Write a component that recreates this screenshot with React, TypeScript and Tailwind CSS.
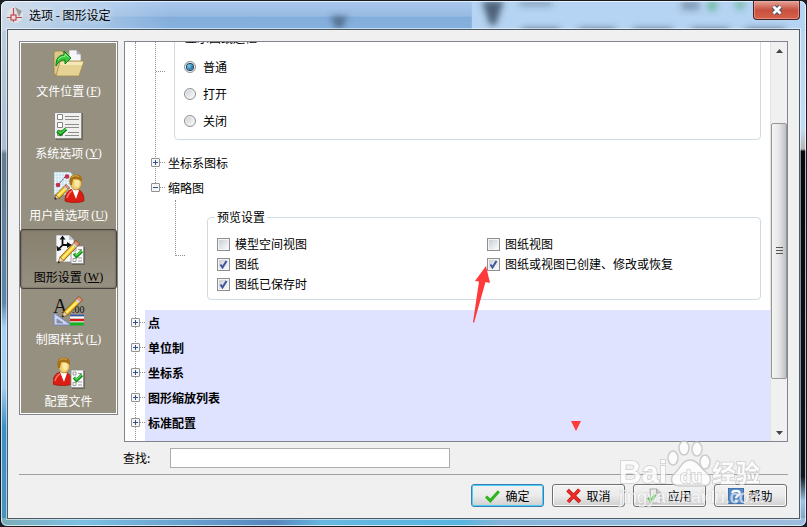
import React, { useState } from "react";

const Pencil = ({ from, to }: { from: [number, number]; to: [number, number] }) => {
  const [x1, y1] = from;
  const [x2, y2] = to;
  const px = (t: number) => x1 + (x2 - x1) * t;
  const py = (t: number) => y1 + (y2 - y1) * t;
  return (
    <g>
      <path d={`M${px(0.2)} ${py(0.2)}L${x2} ${y2}`} stroke="#7a5410" strokeWidth="5.600" />
      <path d={`M${px(0.2)} ${py(0.2)}L${px(0.8)} ${py(0.8)}`} stroke="#f7c31e" strokeWidth="4.400" />
      <path d={`M${px(0.2)} ${py(0.2)}L${px(0.8)} ${py(0.8)}`} stroke="#fff08a" strokeWidth="1.800" />
      <path d={`M${px(0.8)} ${py(0.8)}L${px(0.88)} ${py(0.88)}`} stroke="#d4dae0" strokeWidth="4.400" />
      <path d={`M${px(0.88)} ${py(0.88)}L${px(0.98)} ${py(0.98)}`} stroke="#f28a7c" strokeWidth="4.400" />
      <path
        d={`M${x1} ${y1}L${px(0.2) - 2} ${py(0.2) - 2}L${px(0.2) + 2} ${py(0.2) + 2}Z`}
        fill="#f0d2a0"
        stroke="#6b4a10"
        strokeWidth=".6"
      />
      <circle cx={px(0.04)} cy={py(0.04)} r="1" fill="#222" />
    </g>
  );
};

const Person = ({ x, y }: { x: number; y: number }) => (
  <g transform={`translate(${x} ${y})`}>
    <path d="M0 27C0 20 2 17 6 15.500L13 15.500C17 17 19 21 19 27C14 29 5 29 0 27Z" fill="#dc1d13" stroke="#9b1009" strokeWidth=".7" />
    <path d="M2 24C3 20 5 18 7 17" stroke="#ff7468" strokeWidth="1.500" fill="none" />
    <path d="M7 15L11 25L14 16Z" fill="#fff" />
    <ellipse cx="11" cy="9" rx="5.500" ry="7" fill="#f0cf70" stroke="#a87824" strokeWidth=".6" />
    <ellipse cx="12" cy="9" rx="2.500" ry="4" fill="#fbe9a6" />
    <path d="M4.500 9C3.500 3 7 .5 11 .5C16 .5 18 4 16.500 8C14 4.500 10 5 8 5.500L7 11C5.500 12 4.500 10 4.500 9Z" fill="#a86f16" />
    <path d="M6.500 3.500C8 1.500 12 1 14 3" stroke="#dfb052" fill="none" />
  </g>
);

const CheckCard = ({ x, y }: { x: number; y: number }) => (
  <g transform={`translate(${x} ${y})`}>
    <path d="M1 1H14V19H1Z" fill="#55524a" opacity=".6" />
    <path d="M0 0H12.500V17.500H0Z" fill="#fafafa" stroke="#8a8a8a" strokeWidth=".8" />
    <path d="M2 2H5V5H2ZM2 12.500H5V15.500H2Z" fill="none" stroke="#888" strokeWidth=".8" />
    <path d="M7 3.500H11M7 12H11M7 15H11" stroke="#999" />
    <path d="M3 7.500L5.500 10.500L11 5" stroke="#138a1c" strokeWidth="3.200" fill="none" />
    <path d="M3.500 7.500L5.500 9.500L10.500 5" stroke="#4fdc4d" strokeWidth="1.300" fill="none" />
  </g>
);

const FolderIcon = () => (
  <svg width="32" height="32" viewBox="0 0 32 32">
    <path d="M1 6L2 4H9L11 6H18V28H3L1 27Z" fill="#dcc88a" stroke="#9c8344" strokeWidth=".8" />
    <path d="M16 3H24L28 7V18H16Z" fill="#f6f6fa" stroke="#999" strokeWidth=".7" />
    <path d="M24 3V7H28Z" fill="#b8bcc8" stroke="#888" strokeWidth=".6" />
    <path d="M7 14H31L26 29H3Z" fill="#e6d293" stroke="#a58c4c" strokeWidth=".8" />
    <path d="M8 15H30L29 18H7Z" fill="#fbf2cb" opacity=".7" />
    <path d="M3 19C3 11 6 8 11 8V4L18 11L12 17V13C8 13 6 14 3 19Z" fill="#35c838" stroke="#0e7c18" strokeWidth="1" />
    <path d="M5 13C7 10 9 9.500 12 9.500V7L15.500 10.500" stroke="#a2f59a" fill="none" strokeWidth=".9" />
  </svg>
);

const OptionsIcon = () => (
  <svg width="32" height="32" viewBox="0 0 32 32">
    <path d="M2 4H30V31H3Z" fill="#57544a" opacity=".7" />
    <path d="M1.500 3.500H28.500V29.500H1.500Z" fill="#f0f0ee" stroke="#8d8d88" />
    <path d="M4.500 5.500H9.500V10.500H4.500ZM4.500 13.500H9.500V18.500H4.500ZM4.500 21.500H9.500V26.500H4.500Z" fill="#fff" stroke="#858585" />
    <path d="M12 7.500H26M12 10.500H26M12 15.500H26M12 18.500H26M15 23.500H26M12 26.500H26" stroke="#8d8d8d" />
    <path d="M4.500 22L7.500 25L13 20" stroke="#0f7f19" strokeWidth="3.600" fill="none" />
    <path d="M5 22L7.500 24.300L12.500 20" stroke="#3ddb3c" strokeWidth="1.600" fill="none" />
  </svg>
);

const UserPrefsIcon = () => (
  <svg width="32" height="32" viewBox="0 0 32 32">
    <path d="M1 1H17L21 5V24H1Z" fill="#f6fbff" stroke="#8aa" strokeWidth=".6" />
    <path d="M4 1V24M7 1V24M10 1V24M13 1V24M16 1V24M1 4H20M1 7H20M1 10H20M1 13H20M1 16H20M1 19H20M1 22H20" stroke="#a7d0e6" strokeWidth=".6" />
    <path d="M5 14L13 5" stroke="#444" strokeDasharray="2 1" />
    <circle cx="5" cy="14" r="2.300" fill="#c52f4c" />
    <circle cx="14" cy="5.500" r="2.300" fill="#c52f4c" />
    <Person x={12} y={3} />
    <Pencil from={[2, 28]} to={[15, 15]} />
  </svg>
);

const DrawingIcon = () => (
  <svg width="32" height="32" viewBox="0 0 32 32">
    <path d="M3 2H16L21 7V29H3Z" fill="#f7f8fb" stroke="#858585" strokeWidth=".7" />
    <path d="M16 2V7H21Z" fill="#c5cbd4" />
    <path d="M9.500 4V12L5 17M9 12H17" stroke="#111" strokeWidth="1.800" fill="none" />
    <path d="M6.500 6.500L9.500 2.500L12.500 6.500ZM14 9L19 12L14 15ZM3.500 12.500L4 18L8.500 17Z" fill="#111" />
    <CheckCard x={18} y={13} />
    <Pencil from={[5, 30]} to={[25, 9]} />
  </svg>
);

const StyleIcon = () => (
  <svg width="32" height="32" viewBox="0 0 32 32">
    <text x="0" y="18" fontSize="20" fill="#111" fontFamily="Liberation Serif, serif">A</text>
    <text x="19" y="18" fontSize="10" fill="#111" fontFamily="Liberation Serif, serif">.00</text>
    <path d="M1 18V30H18Z" fill="#ccd4f4" stroke="#7583b4" />
    <path d="M4 24V28H10Z" fill="#969080" stroke="#7583b4" strokeWidth=".7" />
    <path d="M17 20.500H31" stroke="#3154b6" strokeWidth="1.600" />
    <path d="M17 22.500H31" stroke="#fff" strokeWidth="2" />
    <path d="M17 25H31" stroke="#dc1717" strokeWidth="2" />
    <path d="M17 27H31" stroke="#fff" strokeWidth="1" />
    <path d="M17 29H31" stroke="#12b222" strokeWidth="3" />
    <Pencil from={[9, 22]} to={[28, 3]} />
  </svg>
);

const ProfileIcon = () => (
  <svg width="32" height="32" viewBox="0 0 32 32">
    <Person x={0} y={0} />
    <CheckCard x={18} y={13} />
  </svg>
);

const sideItems = [
  { label: "文件位置", accel: "F", icon: <FolderIcon /> },
  { label: "系统选项", accel: "Y", icon: <OptionsIcon /> },
  { label: "用户首选项", accel: "U", icon: <UserPrefsIcon /> },
  { label: "图形设置", accel: "W", icon: <DrawingIcon /> },
  { label: "制图样式", accel: "L", icon: <StyleIcon /> },
  { label: "配置文件", accel: "", icon: <ProfileIcon /> },
];

const sections = ["点", "单位制", "坐标系", "图形缩放列表", "标准配置"];

const AeroBackdrop = () => (
  <svg className="absolute inset-0 w-full h-full" viewBox="0 0 807 527" preserveAspectRatio="none">
    <defs>
      <linearGradient id="title" x1="0" x2="0" y1="0" y2="1">
        <stop offset="0" stopColor="#a9c8ee" />
        <stop offset=".5" stopColor="#98bae2" />
        <stop offset=".55" stopColor="#83addb" />
        <stop offset="1" stopColor="#86b2e0" />
      </linearGradient>
      <linearGradient id="fade" x1="0" x2="1" y1="0" y2="0">
        <stop offset="0" stopColor="#dce3ea" stopOpacity=".8" />
        <stop offset=".55" stopColor="#cfe0f0" stopOpacity=".45" />
        <stop offset="1" stopColor="#cfe0f0" stopOpacity="0" />
      </linearGradient>
      <linearGradient id="left" x1="0" x2="0" y1="0" y2="1">
        <stop offset="0" stopColor="#bccddd" />
        <stop offset=".24" stopColor="#a9bed2" />
        <stop offset=".25" stopColor="#637d94" />
        <stop offset=".55" stopColor="#5f86a8" />
        <stop offset=".6" stopColor="#a9d2f2" />
        <stop offset=".72" stopColor="#a5cdec" />
        <stop offset=".8" stopColor="#3a91c9" />
        <stop offset="1" stopColor="#4a93bd" />
      </linearGradient>
      <linearGradient id="right" x1="0" x2="0" y1="0" y2="1">
        <stop offset="0" stopColor="#bad5f1" />
        <stop offset=".2" stopColor="#c2dcf6" />
        <stop offset=".24" stopColor="#b4b4b4" />
        <stop offset=".245" stopColor="#05090f" />
        <stop offset=".9" stopColor="#0c1520" />
        <stop offset=".95" stopColor="#9ec3e8" />
        <stop offset="1" stopColor="#7598b8" />
      </linearGradient>
      <linearGradient id="bottom" x1="0" x2="1" y1="0" y2="0">
        <stop offset="0" stopColor="#7cacb8" />
        <stop offset=".1" stopColor="#7dc0e2" />
        <stop offset=".34" stopColor="#5786bd" />
        <stop offset=".4" stopColor="#67b8df" />
        <stop offset=".57" stopColor="#58b4df" />
        <stop offset=".62" stopColor="#84b4d9" />
        <stop offset="1" stopColor="#9cbcdc" />
      </linearGradient>
      <filter id="blur"><feGaussianBlur stdDeviation="3" /></filter>
    </defs>
    <rect width="807" height="527" fill="#90b6de" />
    <rect y="29" width="8" height="498" fill="url(#left)" />
    <rect x="799" y="29" width="8" height="498" fill="url(#right)" />
    <rect y="519" width="807" height="8" fill="url(#bottom)" />
    <rect width="807" height="30" fill="url(#title)" />
    <rect width="170" height="30" fill="url(#fade)" />
    <rect x="472" width="335" height="30" fill="#b5d3f2" />
    <g filter="url(#blur)" fill="#33475d">
      <path d="M330 15H348L341 28H336Z" opacity=".6" />
      <path d="M482 0H504L496 24H490Z" opacity=".8" />
      <path d="M522 27H560V34H522ZM579 27H616V34H579ZM634 27H673V34H634ZM692 27H730V34H692ZM746 27H786V34H746Z" opacity=".6" />
      <path d="M520 0H552V5H520ZM682 0H700V9H682Z" opacity=".4" />
      <circle cx="713" cy="5" r="5" fill="#3ba765" opacity=".6" />
      <circle cx="741" cy="4" r="5" fill="#3ba765" opacity=".5" />
    </g>
  </svg>
);

const Expander = ({ open = false }: { open?: boolean }) => (
  <>
    <button
      type="button"
      aria-label={open ? "-" : "+"}
      className="-ml-[5px] w-[9px] h-[9px] shrink-0 rounded-[1px] border border-[#919191] bg-[#f6f6f6]"
    >
      <svg width="7" height="7" viewBox="0 0 7 7" className="block">
        <path d={open ? "M1 3.500H6" : "M1 3.500H6M3.500 1V6"} stroke="#2e5092" />
      </svg>
    </button>
    <span className="w-[5px] shrink-0 border-t border-dotted border-[#909090]" />
  </>
);

interface CheckProps {
  label: string;
  initial?: boolean;
  children?: React.ReactNode;
}

const CheckBox = ({ label, initial = false, children }: CheckProps) => {
  const [checked, setChecked] = useState(initial);
  return (
    <label className="relative flex items-center gap-[5px] h-5">
      <span className="relative w-[13px] h-[13px]">
        <input
          type="checkbox"
          checked={checked}
          onChange={(e) => setChecked(e.target.checked)}
          className="peer block appearance-none w-[13px] h-[13px] border border-[#8e8f8f] bg-linear-to-br from-[#c5cad0] to-white shadow-[inset_0_0_0_1px_#f4f4f4]"
        />
        <svg width="13" height="13" viewBox="0 0 13 13" className="absolute inset-0 hidden peer-checked:block pointer-events-none">
          <path d="M3.500 6.500L5.500 9.500L9.500 3" stroke="#3c559c" strokeWidth="2" fill="none" />
        </svg>
      </span>
      {label}
      {children}
    </label>
  );
};

const Arrow = () => (
  <svg width="20" height="58" viewBox="0 0 20 58" className="absolute z-10 -left-[15px] top-3 pointer-events-none">
    <path d="M14 0L18 17L13.500 16L2 57L1 56L7 15.500L3 15Z" fill="#ff3a3a" />
  </svg>
);

const buttons = [
  {
    label: "确定",
    icon: <path d="M1 8L5 12L13 3" stroke="#2bb51c" strokeWidth="2.800" fill="none" />,
  },
  {
    label: "取消",
    icon: (
      <>
        <path d="M1.500 2L13 13M12.500 1.500L2 13" stroke="#a60d10" strokeWidth="3.400" />
        <path d="M1.500 2L13 13M12.500 1.500L2 13" stroke="#f22a26" strokeWidth="2.400" />
      </>
    ),
  },
  {
    label: "应用",
    icon: (
      <>
        <path d="M3 1H9L13 5V14H3Z" fill="#eee" stroke="#aaa" />
        <path d="M9 1V5H13" fill="#ccc" stroke="#aaa" />
        <path d="M1 9L4 12L8 6" stroke="#31b728" strokeWidth="2.400" fill="none" />
      </>
    ),
  },
  {
    label: "帮助",
    icon: (
      <>
        <rect x="0" y="0" width="15" height="15" rx="1" fill="#568bc8" stroke="#2e5c99" />
        <path d="M4 5C4 2 11 2 11 5C11 7.500 7.500 7 7.500 9.500M7.500 11V13" stroke="#fff" strokeWidth="2" fill="none" />
      </>
    ),
  },
];

const Watermark = () => (
  <svg width="162" height="76" viewBox="0 0 162 76" className="absolute right-[30px] bottom-3 pointer-events-none">
    <g fill="#fff" stroke="#c4c4c4" strokeWidth="1.500" opacity=".8">
      <ellipse cx="59" cy="20" rx="5" ry="7" />
      <ellipse cx="70" cy="10" rx="5" ry="7" />
      <ellipse cx="83" cy="11" rx="5" ry="7" />
      <ellipse cx="91" cy="24" rx="5" ry="7" />
      <path d="M76 22C68 22 67 30 61 35C55 40 57 48 65 48H89C97 48 99 40 93 35C86 30 84 22 76 22Z" />
      <g paintOrder="stroke" fontFamily="Liberation Sans, sans-serif" fontWeight="bold">
        <text x="5" y="45" fontSize="31">Bai</text>
        <text x="66" y="45" fontSize="18">du</text>
      </g>
      <text x="98" y="44" fontSize="24" fontWeight="bold" paintOrder="stroke" fontFamily="Noto Sans CJK SC, sans-serif">经验</text>
      <text x="5" y="65" fontSize="18" strokeWidth="1" opacity=".8" paintOrder="stroke" fontFamily="Liberation Sans, sans-serif">jingyan.baidu.com</text>
    </g>
  </svg>
);

function App() {
  const [active, setActive] = useState("图形设置");
  const [mode, setMode] = useState("普通");
  const [query, setQuery] = useState("");

  return (
    <div className="bg-[#1c2026] text-black text-[12px] leading-4 font-['Noto_Sans_CJK_SC',sans-serif]">
      <div className="relative h-screen overflow-hidden flex flex-col px-[7px] pb-[7px] rounded-[7px] border border-[#181c22]">
        <AeroBackdrop />
        <div className="absolute inset-0 rounded-[6px] border border-white/70 pointer-events-none" />

        <header className="relative flex h-7 shrink-0 -mx-[2px]">
          <div className="flex items-center gap-[6px] pl-px flex-1">
            <svg width="16" height="16" viewBox="0 0 16 16">
              <circle cx="8" cy="8" r="8" fill="#e2e2e4" />
              <path d="M8 0L15 4L12 10Z" fill="#9b9b9e" />
              <path d="M6.500 1V15M0 10.500H15" stroke="#bd4a52" strokeWidth="1.200" />
              <rect x="4" y="8" width="5" height="5" fill="#f1dfe0" stroke="#bd4a52" strokeWidth="1.200" />
            </svg>
            <h1 className="[text-shadow:0_0_6px_#fff]">选项 - 图形设定</h1>
          </div>
          <button
            type="button"
            aria-label="关闭窗口"
            className="flex items-center justify-center w-[47px] h-[19px] mr-px rounded-b-[4px] border border-t-0 border-[#4c2229] bg-linear-to-b from-[#e3a397] via-[#c8513f] via-50% to-[#d7614a] shadow-[inset_0_0_0_1px_#f0b8ac88]"
          >
            <svg width="14" height="12" viewBox="0 0 14 12">
              <path d="M3.500 2.500L10.500 9.500M10.500 2.500L3.500 9.500" stroke="#4f5468" strokeWidth="5" />
              <path d="M3.500 2.500L10.500 9.500M10.500 2.500L3.500 9.500" stroke="#fff" strokeWidth="2.800" />
            </svg>
          </button>
        </header>

        <main className="relative flex flex-col flex-1 min-h-0 -mx-px border border-[#4c5a66] bg-[#f0f0f0] px-[11px] py-[11px] shadow-[0_0_0_1px_#ffffff88]">
          <div className="flex flex-1 min-h-0 items-start gap-[6px]">
            <nav className="w-[99px] shrink-0 border border-[#84848c] bg-[#969080] shadow-[inset_0_0_0_1px_#fff]">
              {sideItems.map((item) => (
                <button
                  type="button"
                  key={item.label}
                  onClick={() => setActive(item.label)}
                  className={
                    "relative flex flex-col items-center w-full h-[62px] pt-[5px] gap-1 " +
                    (active === item.label ? "text-black" : "text-white")
                  }
                >
                  {active === item.label && (
                    <span className="absolute inset-x-0 top-px bottom-px rounded-[3px] border border-[#45423b] bg-linear-to-b from-[#87806f] to-[#969080] shadow-[inset_0_0_2px_#504d45]" />
                  )}
                  <span className="relative">{item.icon}</span>
                  <span className="relative flex gap-[2px] whitespace-nowrap">
                    {item.label}
                    {item.accel && (
                      <span className="font-['Liberation_Serif',serif]">
                        (<u>{item.accel}</u>)
                      </span>
                    )}
                  </span>
                </button>
              ))}
            </nav>

            <section className="flex flex-1 min-w-0 h-full border border-[#84848c] bg-white">
              <div className="flex-1 min-w-0 h-full overflow-hidden">
                <ul className="ml-[10px] min-h-full border-l border-dotted border-[#909090]">
                  <li>
                    <ul className="ml-[19px] border-l border-dotted border-[#909090] pb-2">
                      <li className="flex items-start">
                        <span className="w-[9px] h-[30px] shrink-0 border-b border-dotted border-[#909090]" />
                        <fieldset className="flex-1 min-w-0 -mt-3 mx-[9px] px-[9px] pt-[7px] pb-[5px] border border-[#d0dbe3] rounded-[4px]">
                          <legend className="px-px">显示图纸边框</legend>
                          {["普通", "打开", "关闭"].map((m) => (
                            <label key={m} className="flex items-center gap-[7px] h-[27px]">
                              <span className="relative w-3 h-3">
                                <input
                                  type="radio"
                                  name="mode"
                                  checked={mode === m}
                                  onChange={() => setMode(m)}
                                  className="peer block appearance-none w-3 h-3 rounded-full border border-[#8e8f8f] bg-linear-to-br from-[#c9cdd2] to-white shadow-[inset_0_0_0_1px_#f4f4f4]"
                                />
                                <span className="absolute inset-[3px] hidden peer-checked:block rounded-full bg-radial-[at_35%_35%] from-[#6fd0f2] to-[#0b4475] shadow-[0_0_0_1px_#1b4263] pointer-events-none" />
                              </span>
                              {m}
                            </label>
                          ))}
                        </fieldset>
                      </li>
                      <li className="flex items-center h-[25px] mt-[10px]">
                        <Expander />
                        <span className="ml-[3px]">坐标系图标</span>
                      </li>
                    </ul>
                    <div className="flex items-center h-[25px] ml-5 -mt-2">
                      <Expander open />
                      <span className="ml-[3px]">缩略图</span>
                    </div>
                    <div className="flex items-start ml-[39px] mb-[10px]">
                      <span className="w-[10px] h-14 shrink-0 border-l border-b border-dotted border-[#909090]" />
                      <fieldset className="flex-1 min-w-0 mt-[9px] ml-[22px] mr-[9px] pl-[9px] pr-[3px] pt-[9px] pb-[5px] border border-[#d0dbe3] rounded-[4px]">
                        <legend className="px-[2px] -ml-[2px]">预览设置</legend>
                        <div className="grid grid-cols-2">
                          <CheckBox label="模型空间视图" />
                          <CheckBox label="图纸视图" />
                          <CheckBox label="图纸" initial />
                          <CheckBox label="图纸或视图已创建、修改或恢复" initial>
                            <Arrow />
                          </CheckBox>
                          <CheckBox label="图纸已保存时" initial />
                        </div>
                      </fieldset>
                    </div>
                  </li>
                  {sections.map((name, i) => (
                    <li key={name} className="flex items-center h-[25px]">
                      <Expander />
                      <div className="relative flex flex-1 items-center h-full pl-[3px] bg-[#dfe3ff] font-bold">
                        {name}
                        {i === sections.length - 1 && (
                          <svg width="10" height="10" viewBox="0 0 10 10" className="absolute right-[189px] bottom-1">
                            <path d="M0 0H10L5 10Z" fill="#ff3a3a" />
                          </svg>
                        )}
                      </div>
                    </li>
                  ))}
                  <li className="h-[25px] ml-[9px] bg-[#dfe3ff]" />
                </ul>
              </div>

              <div className="flex flex-col w-[17px] shrink-0 bg-[#f0f0f0] border-l border-[#e2e2e2]">
                <button type="button" aria-label="向上" className="flex items-center justify-center h-[17px]">
                  <svg width="7" height="4" viewBox="0 0 7 4"><path d="M0 4L3.500 0L7 4Z" fill="#444" /></svg>
                </button>
                <div className="flex-[65]" />
                <div className="flex flex-[256] flex-col items-center justify-center gap-[2px] rounded-[2px] border border-[#979797] bg-linear-to-r from-[#f5f5f5] via-[#e6e6e8] via-50% to-[#bfc0c4]">
                  <span className="w-[7px] h-px bg-[#555]" />
                  <span className="w-[7px] h-px bg-[#555]" />
                  <span className="w-[7px] h-px bg-[#555]" />
                </div>
                <div className="flex-[46]" />
                <button type="button" aria-label="向下" className="flex items-center justify-center h-[17px]">
                  <svg width="7" height="4" viewBox="0 0 7 4"><path d="M0 0L3.500 4L7 0Z" fill="#444" /></svg>
                </button>
              </div>
            </section>
          </div>

          <div className="flex items-center mt-[6px] ml-[104px]">
            <label htmlFor="search" className="w-[47px]">查找:</label>
            <input
              id="search"
              value={query}
              onChange={(e) => setQuery(e.target.value)}
              className="w-[280px] h-5 px-1 border border-[#abadb3] bg-white outline-none"
            />
          </div>

          <hr className="mt-[6px] border-[#a0a0a0]" />

          <div className="flex justify-end gap-2 mt-[9px] pr-px">
            {buttons.map((b, i) => (
              <button
                type="button"
                key={b.label}
                className={
                  "flex items-center justify-center gap-1 w-[73px] h-[23px] rounded-[3px] border bg-linear-to-b from-[#f2f2f2] via-[#ebebeb] via-50% to-[#cfcfcf] " +
                  (i === 0
                    ? "border-[#3c7fb1] shadow-[inset_0_0_0_1px_#48d0f6]"
                    : "border-[#707070] shadow-[inset_0_0_0_1px_#fbfbfb]")
                }
              >
                <svg width="16" height="16" viewBox="0 0 15 15">{b.icon}</svg>
                {b.label}
              </button>
            ))}
          </div>
        </main>

        <Watermark />
      </div>
    </div>
  );
}

export default App;
